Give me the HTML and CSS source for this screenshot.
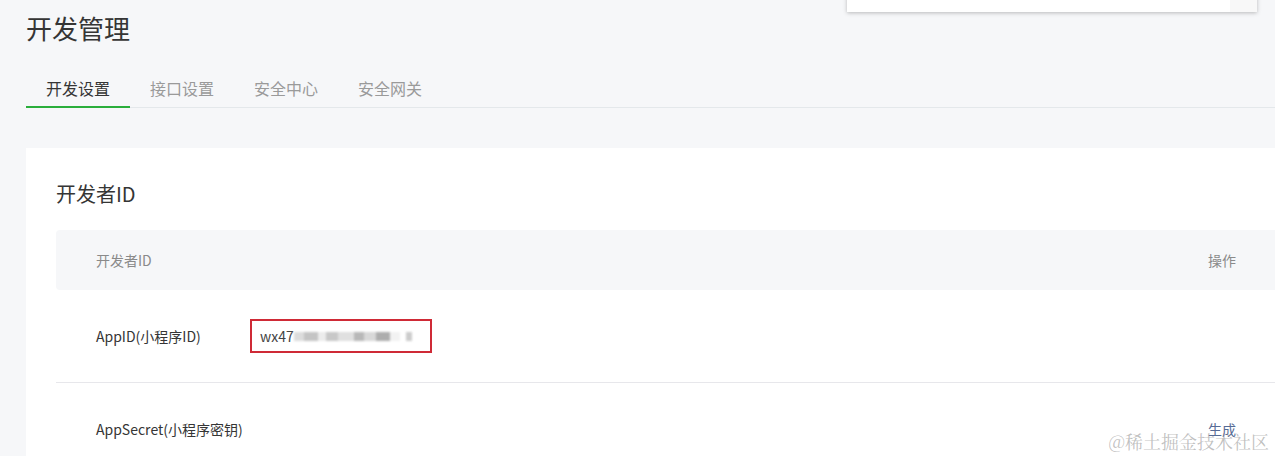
FILE: index.html
```html
<!DOCTYPE html>
<html lang="zh-CN">
<head>
<meta charset="utf-8">
<title>开发管理</title>
<link rel="stylesheet" href="styles.css">
</head>
<body>
<div class="page">
  <h1 class="title">开发管理</h1>
  <div class="tabs">
    <div class="tab active">开发设置</div>
    <div class="tab">接口设置</div>
    <div class="tab">安全中心</div>
    <div class="tab">安全网关</div>
  </div>
  <div class="card">
    <h2 class="card-title">开发者ID</h2>
    <div class="table">
      <div class="thead">
        <div class="th-name">开发者ID</div>
        <div class="th-op">操作</div>
      </div>
      <div class="row">
        <div class="label">AppID(小程序ID)</div>
        <div class="value">
          <div class="idbox">wx47<span class="mosaic"><i class="m1"></i><i class="m2"></i><i class="m3"></i><i class="m4"></i><i class="m5"></i><i class="m6"></i><i class="m7"></i><i class="m8"></i><i class="m9"></i><i class="m10"></i></span></div>
        </div>
        <div class="op"></div>
      </div>
      <div class="row last">
        <div class="label">AppSecret(小程序密钥)</div>
        <div class="value"></div>
        <div class="op"><a class="link">生成</a></div>
      </div>
    </div>
  </div>
</div>
<div class="dropdown"><div class="dd-scroll"></div></div>
<div class="watermark">@稀土掘金技术社区</div>
</body>
</html>
```
FILE: styles.css
```css
html, body {
  margin: 0;
  padding: 0;
}
body {
  background: #f6f7f9;
  font-family: "Noto Sans CJK SC", "Noto Sans", sans-serif;
  color: #353535;
  width: 1275px;
  height: 456px;
  overflow: hidden;
  position: relative;
}
.page {
  padding-left: 26px;
}
.title {
  margin: 0;
  padding-top: 10px;
  font-size: 26px;
  line-height: 36px;
  font-weight: 400;
  color: #353535;
}
.tabs {
  display: flex;
  margin-top: 24px;
  border-bottom: 1px solid #e4e8eb;
}
.tab {
  padding: 0 20px;
  font-size: 16px;
  line-height: 36px;
  color: #9a9a9a;
  border-bottom: 2px solid transparent;
  margin-bottom: -1px;
}
.tab.active {
  color: #353535;
  border-bottom-color: #2aae3c;
}
.card {
  margin-top: 40px;
  background: #fff;
  padding: 32px 0 0 30px;
}
.card-title {
  margin: 0;
  font-size: 20px;
  line-height: 28px;
  font-weight: 400;
  color: #353535;
}
.table {
  margin-top: 22px;
}
.thead {
  display: flex;
  justify-content: space-between;
  background: #f6f7f9;
  border-radius: 4px 0 0 4px;
  height: 60px;
  line-height: 60px;
  padding: 0 39px 0 40px;
  font-size: 14px;
  color: #8a8a8a;
}
.row {
  display: flex;
  align-items: center;
  height: 92px;
  padding: 0 39px 0 40px;
  border-bottom: 1px solid #e7e7eb;
  font-size: 14px;
}
.row.last {
  border-bottom: none;
  height: 73px;
  align-items: flex-start;
  box-sizing: border-box;
  padding-top: 36px;
  line-height: 20px;
}
.label {
  width: 154px;
  flex: none;
  color: #353535;
}
.value {
  flex: 1;
}
.op {
  flex: none;
}
.idbox {
  box-sizing: border-box;
  width: 182px;
  height: 34px;
  border: 2px solid #cf2a36;
  padding-left: 8px;
  display: flex;
  align-items: center;
  color: #444;
  font-size: 14px;
}
.mosaic {
  display: flex;
  align-items: center;
  height: 10px;
  filter: blur(1px);
}
.mosaic i {
  display: block;
  height: 9px;
}
.m1 { width: 10px; background: #dcdcdc; }
.m2 { width: 14px; background: #c4c4c4; }
.m3 { width: 8px; background: #ececec; }
.m4 { width: 12px; background: #c8c8c8; }
.m5 { width: 16px; background: #e0e0e0; }
.m6 { width: 10px; background: #b8b8b8; }
.m7 { width: 12px; background: #d8d8d8; }
.m8 { width: 14px; background: #adadad; }
.m9 { width: 10px; background: #f2f2f2; }
.m10 { width: 6px; background: #cccccc; margin-left: 6px; }
.link {
  color: #576b95;
  font-size: 14px;
}
.dropdown {
  position: absolute;
  left: 847px;
  top: -20px;
  width: 410px;
  height: 32px;
  background: #fff;
  box-shadow: 0 1px 4px rgba(0,0,0,0.25);
  display: flex;
  justify-content: flex-end;
}
.dd-scroll {
  width: 27px;
  background: #f8f8f8;
}
.watermark {
  position: absolute;
  right: 6px;
  bottom: 4px;
  font-family: "Noto Serif CJK SC", "Noto Sans CJK SC", serif;
  font-size: 18px;
  line-height: 22px;
  color: rgba(140,140,140,0.55);
}
```
